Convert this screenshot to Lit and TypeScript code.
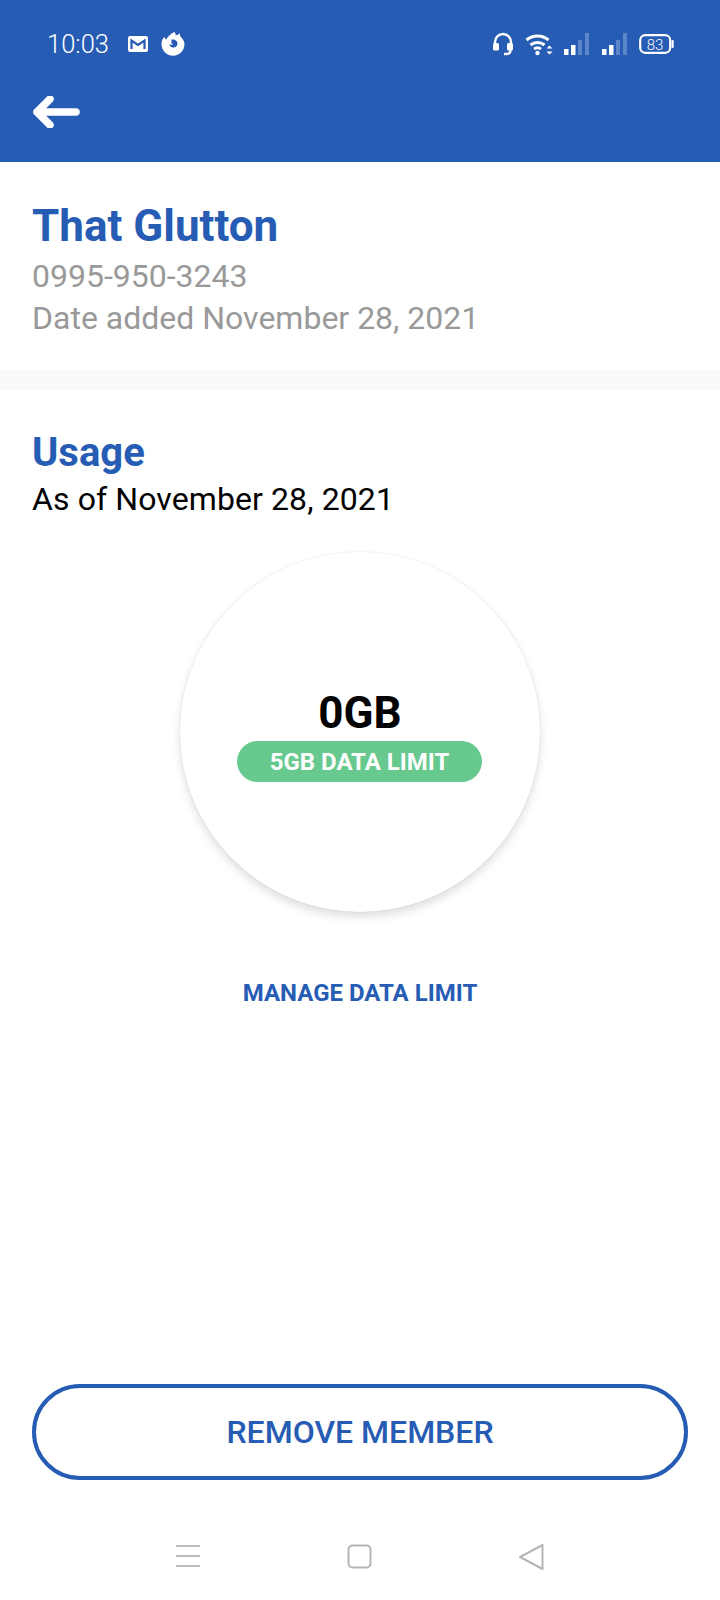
import { LitElement, html, css } from 'lit';
import { customElement } from 'lit/decorators.js';

@customElement('app-root')
export class AppRoot extends LitElement {
  static override styles = css`
    :host {
      display: flex; flex-direction: column;
      width: 720px; height: 1600px;
      background: #fff;
      font-family: Roboto, "Liberation Sans", sans-serif;
      --blue: #265cb4;
    }
    svg { display: block; flex: none; }

    .top { height: 162px; background: var(--blue); color: #fff; box-sizing: border-box; }
    .status {
      display: flex; align-items: center;
      height: 40px; padding: 24px 46px 0 47px;
    }
    .time { font-size: 25.500px; line-height: 40px; width: 81px; font-weight: 300; }
    .gap { flex: 1; }
    .back { margin: 32px 0 0 32px; }

    .info { padding: 39px 32px 31px; }
    .name { font-size: 44px; line-height: 50px; font-weight: 700; color: var(--blue); }
    .muted { font-size: 32px; line-height: 42px; color: #999; }
    .phone { margin-top: 4px; }

    .divider { height: 20px; background: #fafafa; }

    .usage { display: flex; flex-direction: column; flex: 1; padding: 40px 32px 0; }
    .usage h2 { margin: 0; font-size: 40px; line-height: 46px; font-weight: 700; color: var(--blue); }
    .asof { margin-top: 2px; font-size: 32px; line-height: 42px; color: #000; letter-spacing: 0.1px; }

    .circle {
      align-self: center;
      display: flex; flex-direction: column; align-items: center;
      width: 360px; height: 360px; box-sizing: border-box;
      margin-top: 32px; padding-top: 136px;
      border-radius: 50%;
      background: #fff;
      box-shadow: 0 5px 10px rgba(0,0,0,0.13), 0 0 2px rgba(0,0,0,0.1);
    }
    .amount { font-size: 44px; line-height: 50px; font-weight: 700; color: #000; }
    .pill {
      margin: 3px 1px 0 0;
      width: 245px; height: 41px;
      display: flex; align-items: center; justify-content: center;
      border-radius: 21px;
      background: #68c98f; color: #fff;
      font-size: 24px; font-weight: 700;
    }
    .manage {
      margin-top: 65px;
      text-align: center;
      font-size: 24px; line-height: 32px; font-weight: 700;
      color: var(--blue);
    }
    .remove {
      margin-top: auto;
      height: 96px; box-sizing: border-box;
      display: flex; align-items: center; justify-content: center;
      border: 4px solid var(--blue); border-radius: 48px;
      background: #fff; color: var(--blue);
      font-family: inherit; font-size: 32px; font-weight: 500;
    }
    .nav {
      height: 120px; box-sizing: border-box;
      display: flex; justify-content: space-between; align-items: flex-start;
      padding: 64px 176px 0 176px;
    }
  `;

  private statusIcons() {
    return html`
      <svg width="22" height="24" viewBox="0 0 22 24" fill="none" stroke="#fff" stroke-width="2.400" style="margin-right:11px">
        <path d="M3 13V10a8 8 0 0 1 16 0v3" />
        <rect x="1" y="11" width="6" height="7.500" rx="1.500" fill="#fff" stroke="none" />
        <rect x="15" y="11" width="6" height="7.500" rx="1.500" fill="#fff" stroke="none" />
        <path d="M18.500 18c0 2.500-1.500 4-3.500 4h-3" />
      </svg>
      <svg width="28" height="24" viewBox="0 0 28 24" fill="none" stroke="#fff" stroke-width="3" style="margin-right:10px">
        <path d="M1.500 8a17 17 0 0 1 22 0" />
        <path d="M5.500 13a11 11 0 0 1 14 0" />
        <path d="M9 17a6 6 0 0 1 7 0" />
        <circle cx="12.500" cy="21" r="2.200" fill="#fff" stroke="none" />
        <path d="M21.500 16.500l3-3 3 3zM21.500 19.500l3 3 3-3z" fill="#fff" stroke="none" />
      </svg>
      ${[0, 1].map(() => html`
        <svg width="28" height="24" viewBox="0 0 28 24" style="margin-right:10px">
          <rect x="1" y="17" width="4.500" height="6" fill="#fff" />
          <rect x="8" y="13" width="4.500" height="10" fill="#fff" />
          <rect x="15" y="8" width="4" height="15" fill="#5b84c9" />
          <rect x="22" y="1" width="4" height="22" fill="#5b84c9" />
        </svg>`)}
      <svg width="35" height="20" viewBox="0 0 35 20">
        <rect x="1.200" y="1.200" width="30" height="17.600" rx="5" fill="none" stroke="#fff" stroke-width="2.200" />
        <rect x="32.500" y="6" width="2.200" height="8" rx="1" fill="#fff" />
        <text x="16" y="15.500" text-anchor="middle" font-family="Roboto, sans-serif" font-size="15" font-weight="300" fill="#fff">83</text>
      </svg>`;
  }

  override render() {
    return html`
      <div class="top">
        <div class="status">
          <span class="time">10:03</span>
          <svg width="20" height="16" viewBox="0 0 20 16" style="margin-right:13px">
            <rect width="20" height="16" rx="2" fill="#fff" />
            <path d="M3.500 13V4.500L10 9l6.500-4.500V13" fill="none" stroke="#265cb4" stroke-width="2.200" />
          </svg>
          <svg width="24" height="24" viewBox="0 0 24 24">
            <path d="M13 0c1.500 1 2 2.500 1.500 3.500 2.500-.5 3.500-1.500 4-2.500.5 1.500.5 2.500 1 3.500C22 7 23.500 9.500 23.500 12.500A11.500 11.500 0 1 1 3.500 4.500c0 1.500.5 2.500 1.500 3C7 4.500 10 1.500 13 0z" fill="#fff" />
            <path d="M10 8c3-1.500 6.500.5 6.500 3.500s-2.500 4.500-5 4c-2-.5-3-2-3-3.500 1.500 1 3 1 3.500.5-1-.5-2-1.500-1.500-2.500 0-1 .5-1.500-.5-2z" fill="#265cb4" />
          </svg>
          <span class="gap"></span>
          ${this.statusIcons()}
        </div>
        <svg class="back" width="48" height="32" viewBox="0 0 48 32" fill="none" stroke="#fff" stroke-width="7.500" stroke-linecap="round" stroke-linejoin="round">
          <path d="M44 16H5M18 3L5 16l13 13" />
        </svg>
      </div>

      <section class="info">
        <div class="name">That Glutton</div>
        <div class="muted phone">0995-950-3243</div>
        <div class="muted">Date added November 28, 2021</div>
      </section>

      <div class="divider"></div>

      <section class="usage">
        <h2>Usage</h2>
        <div class="asof">As of November 28, 2021</div>
        <div class="circle">
          <div class="amount">0GB</div>
          <div class="pill">5GB DATA LIMIT</div>
        </div>
        <div class="manage">MANAGE DATA LIMIT</div>
        <div class="remove">REMOVE MEMBER</div>
      </section>

      <div class="nav">
        <svg width="24" height="24" viewBox="0 0 24 24" stroke="#bdbdbd" stroke-width="2">
          <path d="M0 2h24M0 12h24M0 22h24" />
        </svg>
        <svg width="25" height="25" viewBox="0 0 25 25" fill="none" stroke="#b5b5b5" stroke-width="2">
          <rect x="1.500" y="1.500" width="22" height="22" rx="4" />
        </svg>
        <svg width="26" height="28" viewBox="0 0 26 28" fill="none" stroke="#b5b5b5" stroke-width="2" stroke-linejoin="round">
          <path d="M24.500 1v24L2 13z" />
        </svg>
      </div>
    `;
  }
}
